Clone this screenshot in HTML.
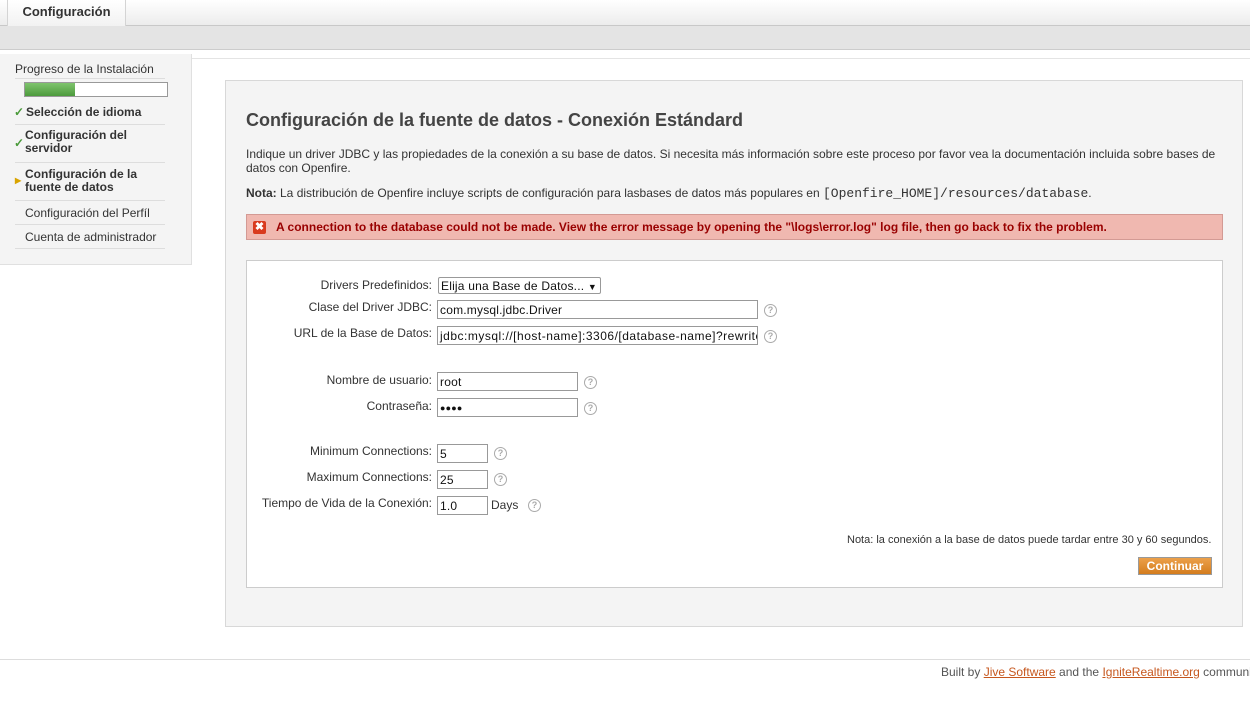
<!DOCTYPE html>
<html><head><meta charset="utf-8">
<style>
*{box-sizing:border-box;margin:0;padding:0}
body{width:1250px;height:712px;overflow:hidden;background:#fff;font-family:"Liberation Sans",Arial,sans-serif;font-size:12px;color:#333;position:relative}
.a{position:absolute}
.topbar{left:0;top:0;width:1250px;height:26px;background:linear-gradient(#fff,#ececec);border-bottom:1px solid #c8c8c8}
.tab{left:7px;top:0;width:119px;height:26px;border-left:1px solid #d4d4d4;border-right:1px solid #d4d4d4;background:linear-gradient(#fff,#f2f2f2);font-weight:bold;font-size:13px;color:#333;text-align:center;line-height:24px}
.band{left:0;top:26px;width:1250px;height:24px;background:#e4e4e4;border-bottom:1px solid #ccc}
.side{left:0;top:54px;width:192px;height:211px;background:#f4f4f4;border-right:1px solid #e0e0e0;border-bottom:1px solid #e0e0e0}
.sitem{position:absolute;left:15px;width:150px;border-bottom:1px solid #ddd;font-size:12px;color:#333}
.main{left:188px;top:58px;width:1062px;height:600px;background:#fff;border-top:1px solid #e4e4e4}
.cbox{left:225px;top:80px;width:1018px;height:547px;background:#f4f4f4;border:1px solid #d8d8d8}
h1{position:absolute;left:246px;top:110px;font-size:18px;font-weight:bold;color:#444}
.err{left:246px;top:214px;width:977px;height:26px;background:#f0b8b0;border:1px solid #d39a94;color:#900;font-weight:bold;font-size:12px;line-height:24px;padding-left:29px}
.form{left:246px;top:260px;width:977px;height:328px;background:#fff;border:1px solid #ccc}
.lbl{position:absolute;right:818px;font-size:12px;color:#333;white-space:nowrap}
.inp{position:absolute;height:19px;border:1px solid #999;background:#fff;font-size:12px;color:#111;padding:2px 2px;line-height:14px;white-space:nowrap;overflow:hidden;letter-spacing:0.2px}
.q{position:absolute;width:13px;height:13px;border:1px solid #aaa;border-radius:50%;color:#aaa;font-size:9px;font-weight:bold;text-align:center;line-height:11px}
.btn{left:1138px;top:557px;width:74px;height:18px;background:linear-gradient(#eca04a,#d47d1e);border:1px solid #999;color:#fff;font-weight:bold;font-size:12px;text-align:center;line-height:16px}
a{color:#c6571e;text-decoration:underline}
</style></head><body>
<div class="a topbar"></div>
<div class="a tab">Configuración</div>
<div class="a band"></div>
<div class="a main"></div>
<div class="a side"></div>
<div class="sitem" style="top:62px;height:17px">Progreso de la Instalación</div>
<div class="a" style="left:24px;top:82px;width:144px;height:15px;border:1px solid #999;background:#fff"><div style="width:50px;height:13px;background:linear-gradient(#7fc46d,#4c9a3c)"></div></div>
<div class="sitem" style="top:100px;height:25px;font-weight:bold;padding-top:5px"><span style="color:#4a9a3a;position:absolute;left:-1px;top:5px">✓</span><span style="padding-left:11px">Selección de idioma</span></div>
<div class="sitem" style="top:125px;height:38px;font-weight:bold;padding:4px 0 0 10px;line-height:13px"><span style="color:#4a9a3a;position:absolute;left:-1px;top:12px">✓</span>Configuración del<br>servidor</div>
<div class="sitem" style="top:163px;height:38px;font-weight:bold;padding:5px 0 0 10px;line-height:13px"><span style="color:#d9a400;position:absolute;left:0;top:11px;font-size:8px">▶</span>Configuración de la<br>fuente de datos</div>
<div class="sitem" style="top:201px;height:24px;padding:5px 0 0 10px">Configuración del Perfíl</div>
<div class="sitem" style="top:225px;height:24px;padding:5px 0 0 10px">Cuenta de administrador</div>

<div class="a cbox"></div>
<h1>Configuración de la fuente de datos - Conexión Estándard</h1>
<div class="a" style="left:246px;top:147px;width:975px;font-size:12px;line-height:14px">Indique un driver JDBC y las propiedades de la conexión a su base de datos. Si necesita más información sobre este proceso por favor vea la documentación incluida sobre bases de datos con Openfire.</div>
<div class="a" style="left:246px;top:186px;font-size:12px;white-space:nowrap"><b>Nota:</b> La distribución de Openfire incluye scripts de configuración para lasbases de datos más populares en <span style="font-family:'Liberation Mono',monospace;font-size:13px">[Openfire_HOME]/resources/database</span>.</div>
<div class="a err"><div style="position:absolute;left:6px;top:6px;width:13px;height:13px;background:#d93a1e;border-radius:2px;color:#fff;font-size:11px;line-height:13px;text-align:center">✖</div>A connection to the database could not be made. View the error message by opening the "\logs\error.log" log file, then go back to fix the problem.</div>
<div class="a form"></div>

<div class="lbl" style="top:278px">Drivers Predefinidos:</div>
<div class="inp" style="left:438px;top:277px;width:163px;height:17px;padding-top:1px;border-radius:2px">Elija una Base de Datos... <span style="font-size:9px">▼</span></div>
<div class="lbl" style="top:300px">Clase del Driver JDBC:</div>
<div class="inp" style="left:437px;top:300px;width:321px">com.mysql.jdbc.Driver</div>
<div class="q" style="left:764px;top:304px">?</div>
<div class="lbl" style="top:326px">URL de la Base de Datos:</div>
<div class="inp" style="left:437px;top:326px;width:321px;letter-spacing:0.5px">jdbc:mysql://[host-name]:3306/[database-name]?rewriteBatchedStatements=true</div>
<div class="q" style="left:764px;top:330px">?</div>

<div class="lbl" style="top:373px">Nombre de usuario:</div>
<div class="inp" style="left:437px;top:372px;width:141px">root</div>
<div class="q" style="left:584px;top:376px">?</div>
<div class="lbl" style="top:399px">Contraseña:</div>
<div class="inp" style="left:437px;top:398px;width:141px;font-size:9px">●●●●</div>
<div class="q" style="left:584px;top:402px">?</div>

<div class="lbl" style="top:444px">Minimum Connections:</div>
<div class="inp" style="left:437px;top:444px;width:51px">5</div>
<div class="q" style="left:494px;top:447px">?</div>
<div class="lbl" style="top:470px">Maximum Connections:</div>
<div class="inp" style="left:437px;top:470px;width:51px">25</div>
<div class="q" style="left:494px;top:473px">?</div>
<div class="lbl" style="top:496px">Tiempo de Vida de la Conexión:</div>
<div class="inp" style="left:437px;top:496px;width:51px">1.0</div>
<div class="a" style="left:491px;top:498px">Days</div>
<div class="q" style="left:528px;top:499px">?</div>

<div class="a" style="left:847px;top:534px;font-size:11px">Nota: la conexión a la base de datos puede tardar entre 30 y 60 segundos.</div>
<div class="a btn">Continuar</div>

<div class="a" style="left:0;top:659px;width:1250px;border-top:1px solid #ddd"></div>
<div class="a" style="left:941px;top:665px;font-size:12px;color:#555;white-space:nowrap">Built by <a>Jive Software</a> and the <a>IgniteRealtime.org</a> community</div>
</body></html>
